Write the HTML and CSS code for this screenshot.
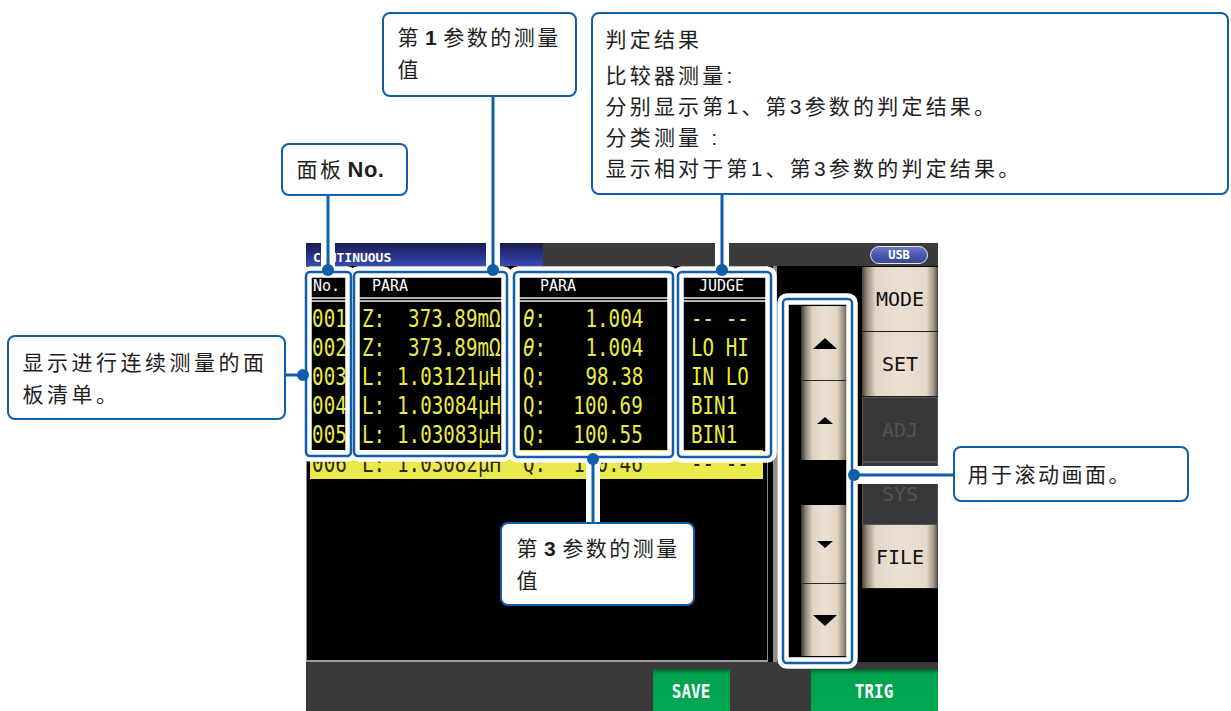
FILE: index.html
```html
<!DOCTYPE html>
<html lang="zh-CN">
<head>
<meta charset="utf-8">
<title>连续测量</title>
<link rel="stylesheet" href="styles.css">
</head>
<body>
<div class="stage">
  <div class="screen">
    <div class="titlebar">
      <div class="title-blue"><span class="title-text">CONTINUOUS</span></div>
      <div class="title-rest"><span class="usb">USB</span></div>
    </div>
    <div class="main">
      <div class="list">
        <div class="row head">
          <div class="c-no">No.</div>
          <div class="c-p1">PARA</div>
          <div class="c-p2">PARA</div>
          <div class="c-j">JUDGE</div>
        </div>
        <div class="rows">
          <div class="row">
            <div class="c-no"><span class="v">001</span></div>
            <div class="c-p1"><span class="l">Z:</span><span class="v">373.89mΩ</span></div>
            <div class="c-p2"><span class="l"><i>θ</i>:</span><span class="v">1.004</span></div>
            <div class="c-j"><span class="l">-- --</span></div>
          </div>
          <div class="row">
            <div class="c-no"><span class="v">002</span></div>
            <div class="c-p1"><span class="l">Z:</span><span class="v">373.89mΩ</span></div>
            <div class="c-p2"><span class="l"><i>θ</i>:</span><span class="v">1.004</span></div>
            <div class="c-j"><span class="l">LO HI</span></div>
          </div>
          <div class="row">
            <div class="c-no"><span class="v">003</span></div>
            <div class="c-p1"><span class="l">L:</span><span class="v">1.03121μH</span></div>
            <div class="c-p2"><span class="l">Q:</span><span class="v">98.38</span></div>
            <div class="c-j"><span class="l">IN LO</span></div>
          </div>
          <div class="row">
            <div class="c-no"><span class="v">004</span></div>
            <div class="c-p1"><span class="l">L:</span><span class="v">1.03084μH</span></div>
            <div class="c-p2"><span class="l">Q:</span><span class="v">100.69</span></div>
            <div class="c-j"><span class="l">BIN1</span></div>
          </div>
          <div class="row">
            <div class="c-no"><span class="v">005</span></div>
            <div class="c-p1"><span class="l">L:</span><span class="v">1.03083μH</span></div>
            <div class="c-p2"><span class="l">Q:</span><span class="v">100.55</span></div>
            <div class="c-j"><span class="l">BIN1</span></div>
          </div>
          <div class="row sel">
            <div class="c-no"><span class="v">006</span></div>
            <div class="c-p1"><span class="l">L:</span><span class="v">1.03082μH</span></div>
            <div class="c-p2"><span class="l">Q:</span><span class="v">100.46</span></div>
            <div class="c-j"><span class="l">-- --</span></div>
          </div>
        </div>
      </div>
      <div class="sbar"></div>
      <div class="scroll">
        <div class="sbtn b1"><svg width="24" height="11" viewBox="0 0 24 11"><polygon points="12,0 24,11 0,11"/></svg></div>
        <div class="sbtn b2"><svg width="16" height="7" viewBox="0 0 16 7"><polygon points="8,0 16,7 0,7"/></svg></div>
        <div class="sgap"></div>
        <div class="sbtn b3"><svg width="16" height="7" viewBox="0 0 16 7"><polygon points="0,0 16,0 8,7"/></svg></div>
        <div class="sbtn b4"><svg width="24" height="11" viewBox="0 0 24 11"><polygon points="0,0 24,0 12,11"/></svg></div>
      </div>
      <div class="menu">
        <div class="mbtn on m1">MODE</div>
        <div class="mbtn on m2">SET</div>
        <div class="mbtn off m3">ADJ</div>
        <div class="mbtn off m4">SYS</div>
        <div class="mbtn on m5">FILE</div>
      </div>
    </div>
    <div class="bottombar">
      <div class="gbtn save"><span class="gt">SAVE</span></div>
      <div class="gbtn trig"><span class="gt">TRIG</span></div>
    </div>
  </div>
</div>

<svg class="overlay" width="1231" height="711" viewBox="0 0 1231 711">
  <g fill="none" stroke="#fff" stroke-width="11.5">
    <rect x="306" y="272" width="45" height="184" rx="4"/>
    <rect x="354" y="272" width="153" height="184" rx="4"/>
    <rect x="514" y="272" width="159" height="185" rx="4"/>
    <rect x="678" y="272" width="93" height="185" rx="4"/>
    <rect x="783" y="299" width="69" height="364" rx="4"/>
  </g>
  <path d="M328 196V270M493 97V270M722 195V270M593 459V522" stroke="#fff" stroke-width="14"/>
  <path d="M854 475H953" stroke="#fff" stroke-width="18"/>
  <g fill="none" stroke="#105eaa" stroke-width="2.5">
    <rect x="306" y="272" width="45" height="184" rx="4"/>
    <rect x="354" y="272" width="153" height="184" rx="4"/>
    <rect x="514" y="272" width="159" height="185" rx="4"/>
    <rect x="678" y="272" width="93" height="185" rx="4"/>
    <rect x="783" y="299" width="69" height="364" rx="4"/>
  </g>
  <path d="M328 196V270M493 97V270M722 195V270M593 459V522M854 475H953M286 375H303" stroke="#105eaa" stroke-width="3" fill="none"/>
  <g fill="#105eaa">
    <circle cx="328" cy="270" r="6"/>
    <circle cx="493" cy="270" r="6"/>
    <circle cx="722" cy="270" r="6"/>
    <circle cx="303" cy="375" r="6"/>
    <circle cx="593" cy="459" r="6"/>
    <circle cx="854" cy="475" r="6"/>
  </g>
</svg>

<div class="callout co-p1">第<b>1</b>参数的测量<br>值</div>
<div class="callout co-no">面板<b>No.</b></div>
<div class="callout co-judge">
  <div class="first">判定结果</div>
  <div>比较器测量:</div>
  <div>分别显示第1、第3参数的判定结果。</div>
  <div>分类测量 :</div>
  <div>显示相对于第1、第3参数的判定结果。</div>
</div>
<div class="callout co-list">显示进行连续测量的面<br>板清单。</div>
<div class="callout co-scroll">用于滚动画面。</div>
<div class="callout co-p3">第<b>3</b>参数的测量<br>值</div>
</body>
</html>
```

FILE: styles.css
```css
* { box-sizing: border-box; margin: 0; padding: 0; }
html, body { width: 1231px; height: 711px; overflow: hidden; background: #fff; }
body { position: relative; font-family: "Liberation Sans", "Noto Sans CJK SC", sans-serif; }

.stage { width: 1231px; height: 711px; padding: 243px 0 0 306px; }
.screen { width: 632px; height: 468px; display: flex; flex-direction: column; background: #000; }

/* title bar */
.titlebar { height: 23px; flex: none; display: flex; }
.title-blue {
  width: 237px;
  background: linear-gradient(#1c1c50, #28338a 55%, #3a4bb2);
  display: flex; align-items: flex-end; padding: 0 0 2px 7px;
}
.title-text { font: bold 13px/13px "DejaVu Sans Mono", monospace; color: #fff; }
.title-rest {
  flex: 1; background: #3b3b3b;
  display: flex; justify-content: flex-end; align-items: center; padding-right: 10px;
}
.usb {
  width: 58px; height: 18px; border-radius: 9px; border: 1px solid #e6e6f0;
  background: linear-gradient(#6f7cc9, #4552a6 60%, #39468f);
  color: #fff; font: bold 12px/16px "DejaVu Sans Mono", monospace; text-align: center;
}

/* main area */
.main { height: 396px; flex: none; display: flex; }
.list {
  width: 462px; background: #000;
  border-left: 1px solid #8a8a8a; border-right: 1px solid #8a8a8a; border-bottom: 2px solid #a0a0a0;
  overflow: hidden;
}
.row {
  display: grid;
  grid-template-columns: 45px 14px 142px 16px 143px 16px 85px;
  margin-left: -4px;
  height: 29px;
  font: 24px/29px "DejaVu Sans Mono", monospace;
  color: #ebeb48;
  white-space: pre;
}
.row i { font-style: italic; }
.c-no { grid-column: 1; display: grid; }
.c-p1 { grid-column: 3; display: grid; padding-right: 3px; }
.c-p2 { grid-column: 5; display: grid; padding: 0 20px 0 3px; }
.c-j { grid-column: 7; display: grid; padding-left: 12px; }
.c-no .v { padding-right: 2px; }
.l, .v { grid-area: 1 / 1; display: inline-block; transform: scaleX(.8); }
.l { justify-self: start; transform-origin: left center; }
.v { justify-self: end; transform-origin: right center; }

.row.head {
  box-sizing: content-box;
  height: 20px;
  padding-top: 11px;
  font: 15px/18px "DejaVu Sans Mono", monospace;
  color: #fff;
  border-bottom: 5px double #b0b0b0;
}
.head .c-no { padding-left: 10px; }
.head .c-p1 { padding-left: 10px; }
.head .c-p2 { padding-left: 20px; }
.head .c-j { padding-left: 0; text-align: center; }
.rows { margin-top: 3px; }
.row.sel {
  color: #2a2a1a;
  background: linear-gradient(to right, transparent 7px, #e9e94c 7px, #e9e94c calc(100% - 4px), transparent calc(100% - 4px));
}

.sbar { width: 18px; background: linear-gradient(to right, #000 0 5px, #8e8e8e 5px 9px, #000 9px); }

.scroll { width: 76px; padding: 40px 0 0 15px; display: flex; flex-direction: column; background: #000; }
.sbtn {
  width: 48px; flex: none;
  background: linear-gradient(to right, #36322c, #8a8072 9%, #dfd3c3 24%, #ebe0d3 50%, #dfd3c3 76%, #8a8072 91%, #36322c);
  display: flex; align-items: center; justify-content: center;
}
.sbtn svg { fill: #000; display: block; }
.b1 { height: 74px; }
.b2 { height: 80px; border-top: 1px solid #2c2a26; }
.sgap { height: 45px; flex: none; }
.b3 { height: 78px; }
.b4 { height: 73px; border-top: 1px solid #2c2a26; }

.menu { width: 76px; padding-top: 1px; display: flex; flex-direction: column; background: #000; }
.mbtn {
  flex: none; display: flex; align-items: center; justify-content: center;
  font: 20px/1 "DejaVu Sans Mono", monospace;
}
.mbtn.on {
  color: #111;
  background: linear-gradient(to right, #4a443b, #9b907f 7%, #e2d7c8 18%, #ebe0d3 50%, #e4d9ca 85%, #9b907f 95%, #4a443b);
  border-bottom: 1px solid #1b1a18;
}
.mbtn.off { color: #555; background: #383838; border: 1px solid #565656; }
.m1 { height: 65px; }
.m2 { height: 65px; }
.m3 { height: 65px; }
.m4 { height: 63px; }
.m5 { height: 64px; }

/* bottom bar */
.bottombar { height: 49px; flex: none; background: #3a3a3a; display: flex; padding-top: 7px; }
.gbtn {
  background: linear-gradient(#0b5f31, #00a24f 5px, #00a851);
  display: flex; justify-content: center; padding-top: 12px;
}
.gt { display: inline-block; color: #fff; font: bold 20px/20px "DejaVu Sans Mono", monospace; transform: scaleX(.8); }
.save { width: 77px; margin-left: 347px; }
.trig { width: 127px; margin-left: 81px; }

/* annotations */
.overlay { position: absolute; left: 0; top: 0; }
.callout {
  position: absolute;
  background: #fff;
  border: 2.5px solid #105eaa;
  border-radius: 8px;
  color: #1e1e1e;
  font-size: 21px;
  line-height: 32px;
  letter-spacing: 2.5px;
  white-space: nowrap;
}
.callout b { font-family: "Liberation Sans", sans-serif; font-weight: bold; margin: 0 4px; }
.co-p1 { left: 382px; top: 12px; width: 195px; height: 85px; padding: 8px 0 0 13.5px; }
.co-no { left: 281px; top: 143px; width: 127px; height: 53px; padding: 8.5px 0 0 13.5px; }
.co-no b { margin: 0 0 0 4px; font-size: 22px; letter-spacing: .5px; }
.co-judge { left: 591px; top: 12px; width: 638px; height: 183px; padding: 10px 0 0 12.5px; line-height: 31px; letter-spacing: 3.2px; }
.co-judge .first { margin-bottom: 5px; }
.co-list { left: 7px; top: 335px; width: 279px; height: 85px; padding: 9.5px 0 0 13.5px; letter-spacing: 3.5px; }
.co-scroll { left: 953px; top: 446px; width: 236px; height: 56px; padding: 10.5px 0 0 12.5px; }
.co-p3 { left: 500px; top: 522px; width: 195px; height: 84px; padding: 9px 0 0 14.5px; }
```
